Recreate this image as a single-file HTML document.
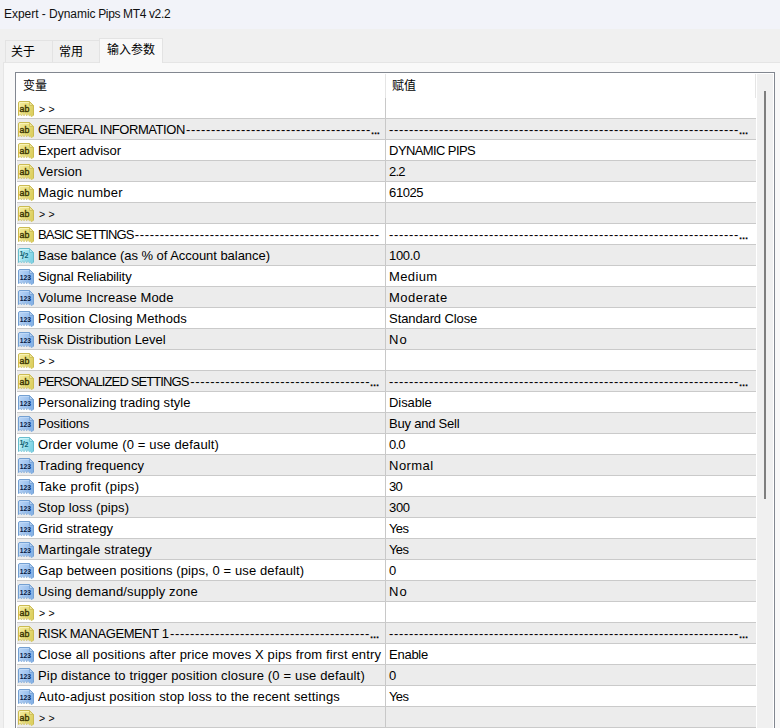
<!DOCTYPE html>
<html><head><meta charset="utf-8"><title>Expert - Dynamic Pips MT4 v2.2</title>
<style>
html,body{margin:0;padding:0;}
body{width:780px;height:728px;overflow:hidden;background:#f0f0f0;position:relative;font-family:"Liberation Sans","Noto Sans CJK SC",sans-serif;color:#000;}
.title{position:absolute;left:0;top:0;width:780px;height:29px;background:#f2f3f9;}
.title span{position:absolute;left:4px;top:7px;font-size:12px;line-height:15px;white-space:pre;letter-spacing:-0.03px;color:#111;}
.tab{position:absolute;top:40px;height:22px;border:1px solid #e3e3e3;border-bottom:none;box-sizing:border-box;background:#f0f0f0;font-size:12px;line-height:22px;padding-left:5px;white-space:nowrap;}
.t1{left:5px;width:48px;}
.t2{left:52px;width:48px;padding-left:6px;}
.t3{left:99px;width:64px;top:38px;height:25px;background:#f9f9f9;z-index:3;line-height:22px;padding-left:7px;}
.panel{position:absolute;left:3px;top:62px;width:790px;height:680px;background:#f9f9f9;border:1px solid #e5e5e5;box-sizing:border-box;}
.list{position:absolute;left:15px;top:72px;width:760px;height:670px;border:1px solid #828790;box-sizing:border-box;background:#fff;}
.hdr{position:absolute;left:1px;top:0;width:740px;height:25px;font-size:12px;}
.hdr span{position:absolute;top:5px;line-height:16px;}
.hsep{position:absolute;top:1px;width:1px;height:24px;background:#e5e5e5;}
.rows{position:absolute;left:1px;top:25px;width:739px;}
.r{position:relative;height:21px;box-sizing:border-box;border-bottom:1px solid #cacaca;font-size:13px;line-height:22px;white-space:nowrap;background:#fff;}
.r.g{background:#ececec;}
.ic{position:absolute;left:1px;top:3px;}
.c1{position:absolute;left:21px;top:0;width:346px;height:20px;overflow:hidden;}
.c2{position:absolute;left:368px;top:0;width:371px;height:20px;box-sizing:border-box;padding-left:3.1px;overflow:hidden;border-left:1px solid #c8c8c8;}
.d{letter-spacing:0.671px;}
.e{letter-spacing:-0.65px;margin-left:-0.4px;-webkit-text-stroke:0.35px #000;}
.gt{font-size:10.5px;word-spacing:0.5px;position:relative;left:1px;top:-0.4px;}
.sb{position:absolute;left:741px;top:1px;width:16px;height:700px;background:#f0f0f0;}
.thumb{position:absolute;left:7px;top:17px;width:2px;height:408px;background:#7f7f7f;}
</style></head><body>
<svg width="0" height="0" style="position:absolute"><defs>
<linearGradient id="gy" x1="0" y1="0" x2="1" y2="0.35"><stop offset="0" stop-color="#f4eca0"/><stop offset="0.55" stop-color="#ebe080"/><stop offset="1" stop-color="#ddd062"/></linearGradient>
<linearGradient id="gb" x1="0" y1="0" x2="1" y2="0.35"><stop offset="0" stop-color="#bcd7f7"/><stop offset="0.55" stop-color="#a2c5f0"/><stop offset="1" stop-color="#86b2e6"/></linearGradient>
<linearGradient id="gc" x1="0" y1="0" x2="1" y2="0.35"><stop offset="0" stop-color="#c4f2f8"/><stop offset="0.55" stop-color="#9fe2ee"/><stop offset="1" stop-color="#80d2e4"/></linearGradient>
</defs></svg>
<div class="title"><span id="ta">Expert - Dynamic </span><span id="tb" style="left:98.2px;letter-spacing:-0.36px">Pips MT4 v2.2</span></div>
<div class="panel"></div>
<div class="tab t1">关于</div>
<div class="tab t2">常用</div>
<div class="tab t3">输入参数</div>
<div class="list">
<div class="hdr"><span style="left:6px;top:5px">变量</span><span style="left:375px;top:5px">赋值</span><div class="hsep" style="left:368px"></div><div class="hsep" style="left:738px"></div></div>
<div class="rows">
<div class="r"><svg class="ic" width="16" height="16" viewBox="0 0 16 16"><path d="M0.5 2 Q0.5 0.5 2 0.5 H11.5 L15.5 4.5 V14.2 L14.6 14.9 L13.4 15.9 L12.4 14.0 L11.3 15 L10 12.6 L8.7 15 L7.4 12.6 L6 15 L4.8 12.6 L3.5 15 L2.2 13 L0.5 15 Z" fill="url(#gy)"/><path d="M0.5 14.6 V2 Q0.5 0.5 2 0.5 H11.5 L15.5 4.5 V14.4" fill="none" stroke="#cbbb52" stroke-width="1" stroke-linejoin="round"/><path d="M15.5 4.5 V14.2 L14.6 14.9 L13.4 15.9 L12.4 14.0 L11.3 15 L10 12.6 L8.7 15 L7.4 12.6 L6 15 L4.8 12.6 L3.5 15 L2.2 13 L0.5 15" fill="none" stroke="#cbbb52" stroke-width="0.5" stroke-linejoin="round"/><path d="M1.5 13 V2 Q1.5 1.5 2 1.5 H11" fill="none" stroke="#fbf6c0" stroke-width="1" stroke-opacity="0.8"/><path d="M11.5 0.7 V4.5 H15.3 Z" fill="#ffffff" fill-opacity="0.32" stroke="#cbbb52" stroke-width="0.8" stroke-linejoin="round"/><text x="1.5" y="10.7" font-size="9.6" fill="#3a3400" stroke="#3a3400" stroke-width="0.4" font-family="Liberation Sans, sans-serif" textLength="9.8" lengthAdjust="spacingAndGlyphs">ab</text></svg><div class="c1"><span id="t0_1" class="gt">&gt; &gt;</span></div><div class="c2"></div></div>
<div class="r g"><svg class="ic" width="16" height="16" viewBox="0 0 16 16"><path d="M0.5 2 Q0.5 0.5 2 0.5 H11.5 L15.5 4.5 V14.2 L14.6 14.9 L13.4 15.9 L12.4 14.0 L11.3 15 L10 12.6 L8.7 15 L7.4 12.6 L6 15 L4.8 12.6 L3.5 15 L2.2 13 L0.5 15 Z" fill="url(#gy)"/><path d="M0.5 14.6 V2 Q0.5 0.5 2 0.5 H11.5 L15.5 4.5 V14.4" fill="none" stroke="#cbbb52" stroke-width="1" stroke-linejoin="round"/><path d="M15.5 4.5 V14.2 L14.6 14.9 L13.4 15.9 L12.4 14.0 L11.3 15 L10 12.6 L8.7 15 L7.4 12.6 L6 15 L4.8 12.6 L3.5 15 L2.2 13 L0.5 15" fill="none" stroke="#cbbb52" stroke-width="0.5" stroke-linejoin="round"/><path d="M1.5 13 V2 Q1.5 1.5 2 1.5 H11" fill="none" stroke="#fbf6c0" stroke-width="1" stroke-opacity="0.8"/><path d="M11.5 0.7 V4.5 H15.3 Z" fill="#ffffff" fill-opacity="0.32" stroke="#cbbb52" stroke-width="0.8" stroke-linejoin="round"/><text x="1.5" y="10.7" font-size="9.6" fill="#3a3400" stroke="#3a3400" stroke-width="0.4" font-family="Liberation Sans, sans-serif" textLength="9.8" lengthAdjust="spacingAndGlyphs">ab</text></svg><div class="c1"><span id="t1_1" style="letter-spacing:-0.443px">GENERAL INFORMATION</span><span class="d" style="margin-left:1.2px">-------------------------------------</span><span class="e">...</span></div><div class="c2"><span class="d" style="margin-left:0px">----------------------------------------------------------------------</span><span class="e">...</span></div></div>
<div class="r"><svg class="ic" width="16" height="16" viewBox="0 0 16 16"><path d="M0.5 2 Q0.5 0.5 2 0.5 H11.5 L15.5 4.5 V14.2 L14.6 14.9 L13.4 15.9 L12.4 14.0 L11.3 15 L10 12.6 L8.7 15 L7.4 12.6 L6 15 L4.8 12.6 L3.5 15 L2.2 13 L0.5 15 Z" fill="url(#gy)"/><path d="M0.5 14.6 V2 Q0.5 0.5 2 0.5 H11.5 L15.5 4.5 V14.4" fill="none" stroke="#cbbb52" stroke-width="1" stroke-linejoin="round"/><path d="M15.5 4.5 V14.2 L14.6 14.9 L13.4 15.9 L12.4 14.0 L11.3 15 L10 12.6 L8.7 15 L7.4 12.6 L6 15 L4.8 12.6 L3.5 15 L2.2 13 L0.5 15" fill="none" stroke="#cbbb52" stroke-width="0.5" stroke-linejoin="round"/><path d="M1.5 13 V2 Q1.5 1.5 2 1.5 H11" fill="none" stroke="#fbf6c0" stroke-width="1" stroke-opacity="0.8"/><path d="M11.5 0.7 V4.5 H15.3 Z" fill="#ffffff" fill-opacity="0.32" stroke="#cbbb52" stroke-width="0.8" stroke-linejoin="round"/><text x="1.5" y="10.7" font-size="9.6" fill="#3a3400" stroke="#3a3400" stroke-width="0.4" font-family="Liberation Sans, sans-serif" textLength="9.8" lengthAdjust="spacingAndGlyphs">ab</text></svg><div class="c1"><span id="t2_1" style="letter-spacing:-0.000px">Expert advisor</span></div><div class="c2"><span id="t2_2" style="letter-spacing:-0.605px">DYNAMIC PIPS</span></div></div>
<div class="r g"><svg class="ic" width="16" height="16" viewBox="0 0 16 16"><path d="M0.5 2 Q0.5 0.5 2 0.5 H11.5 L15.5 4.5 V14.2 L14.6 14.9 L13.4 15.9 L12.4 14.0 L11.3 15 L10 12.6 L8.7 15 L7.4 12.6 L6 15 L4.8 12.6 L3.5 15 L2.2 13 L0.5 15 Z" fill="url(#gy)"/><path d="M0.5 14.6 V2 Q0.5 0.5 2 0.5 H11.5 L15.5 4.5 V14.4" fill="none" stroke="#cbbb52" stroke-width="1" stroke-linejoin="round"/><path d="M15.5 4.5 V14.2 L14.6 14.9 L13.4 15.9 L12.4 14.0 L11.3 15 L10 12.6 L8.7 15 L7.4 12.6 L6 15 L4.8 12.6 L3.5 15 L2.2 13 L0.5 15" fill="none" stroke="#cbbb52" stroke-width="0.5" stroke-linejoin="round"/><path d="M1.5 13 V2 Q1.5 1.5 2 1.5 H11" fill="none" stroke="#fbf6c0" stroke-width="1" stroke-opacity="0.8"/><path d="M11.5 0.7 V4.5 H15.3 Z" fill="#ffffff" fill-opacity="0.32" stroke="#cbbb52" stroke-width="0.8" stroke-linejoin="round"/><text x="1.5" y="10.7" font-size="9.6" fill="#3a3400" stroke="#3a3400" stroke-width="0.4" font-family="Liberation Sans, sans-serif" textLength="9.8" lengthAdjust="spacingAndGlyphs">ab</text></svg><div class="c1"><span id="t3_1" style="letter-spacing:0.117px">Version</span></div><div class="c2"><span id="t3_2" style="letter-spacing:-0.875px">2.2</span></div></div>
<div class="r"><svg class="ic" width="16" height="16" viewBox="0 0 16 16"><path d="M0.5 2 Q0.5 0.5 2 0.5 H11.5 L15.5 4.5 V14.2 L14.6 14.9 L13.4 15.9 L12.4 14.0 L11.3 15 L10 12.6 L8.7 15 L7.4 12.6 L6 15 L4.8 12.6 L3.5 15 L2.2 13 L0.5 15 Z" fill="url(#gy)"/><path d="M0.5 14.6 V2 Q0.5 0.5 2 0.5 H11.5 L15.5 4.5 V14.4" fill="none" stroke="#cbbb52" stroke-width="1" stroke-linejoin="round"/><path d="M15.5 4.5 V14.2 L14.6 14.9 L13.4 15.9 L12.4 14.0 L11.3 15 L10 12.6 L8.7 15 L7.4 12.6 L6 15 L4.8 12.6 L3.5 15 L2.2 13 L0.5 15" fill="none" stroke="#cbbb52" stroke-width="0.5" stroke-linejoin="round"/><path d="M1.5 13 V2 Q1.5 1.5 2 1.5 H11" fill="none" stroke="#fbf6c0" stroke-width="1" stroke-opacity="0.8"/><path d="M11.5 0.7 V4.5 H15.3 Z" fill="#ffffff" fill-opacity="0.32" stroke="#cbbb52" stroke-width="0.8" stroke-linejoin="round"/><text x="1.5" y="10.7" font-size="9.6" fill="#3a3400" stroke="#3a3400" stroke-width="0.4" font-family="Liberation Sans, sans-serif" textLength="9.8" lengthAdjust="spacingAndGlyphs">ab</text></svg><div class="c1"><span id="t4_1" style="letter-spacing:0.191px">Magic number</span></div><div class="c2"><span id="t4_2" style="letter-spacing:-0.438px">61025</span></div></div>
<div class="r g"><svg class="ic" width="16" height="16" viewBox="0 0 16 16"><path d="M0.5 2 Q0.5 0.5 2 0.5 H11.5 L15.5 4.5 V14.2 L14.6 14.9 L13.4 15.9 L12.4 14.0 L11.3 15 L10 12.6 L8.7 15 L7.4 12.6 L6 15 L4.8 12.6 L3.5 15 L2.2 13 L0.5 15 Z" fill="url(#gy)"/><path d="M0.5 14.6 V2 Q0.5 0.5 2 0.5 H11.5 L15.5 4.5 V14.4" fill="none" stroke="#cbbb52" stroke-width="1" stroke-linejoin="round"/><path d="M15.5 4.5 V14.2 L14.6 14.9 L13.4 15.9 L12.4 14.0 L11.3 15 L10 12.6 L8.7 15 L7.4 12.6 L6 15 L4.8 12.6 L3.5 15 L2.2 13 L0.5 15" fill="none" stroke="#cbbb52" stroke-width="0.5" stroke-linejoin="round"/><path d="M1.5 13 V2 Q1.5 1.5 2 1.5 H11" fill="none" stroke="#fbf6c0" stroke-width="1" stroke-opacity="0.8"/><path d="M11.5 0.7 V4.5 H15.3 Z" fill="#ffffff" fill-opacity="0.32" stroke="#cbbb52" stroke-width="0.8" stroke-linejoin="round"/><text x="1.5" y="10.7" font-size="9.6" fill="#3a3400" stroke="#3a3400" stroke-width="0.4" font-family="Liberation Sans, sans-serif" textLength="9.8" lengthAdjust="spacingAndGlyphs">ab</text></svg><div class="c1"><span id="t5_1" class="gt">&gt; &gt;</span></div><div class="c2"></div></div>
<div class="r"><svg class="ic" width="16" height="16" viewBox="0 0 16 16"><path d="M0.5 2 Q0.5 0.5 2 0.5 H11.5 L15.5 4.5 V14.2 L14.6 14.9 L13.4 15.9 L12.4 14.0 L11.3 15 L10 12.6 L8.7 15 L7.4 12.6 L6 15 L4.8 12.6 L3.5 15 L2.2 13 L0.5 15 Z" fill="url(#gy)"/><path d="M0.5 14.6 V2 Q0.5 0.5 2 0.5 H11.5 L15.5 4.5 V14.4" fill="none" stroke="#cbbb52" stroke-width="1" stroke-linejoin="round"/><path d="M15.5 4.5 V14.2 L14.6 14.9 L13.4 15.9 L12.4 14.0 L11.3 15 L10 12.6 L8.7 15 L7.4 12.6 L6 15 L4.8 12.6 L3.5 15 L2.2 13 L0.5 15" fill="none" stroke="#cbbb52" stroke-width="0.5" stroke-linejoin="round"/><path d="M1.5 13 V2 Q1.5 1.5 2 1.5 H11" fill="none" stroke="#fbf6c0" stroke-width="1" stroke-opacity="0.8"/><path d="M11.5 0.7 V4.5 H15.3 Z" fill="#ffffff" fill-opacity="0.32" stroke="#cbbb52" stroke-width="0.8" stroke-linejoin="round"/><text x="1.5" y="10.7" font-size="9.6" fill="#3a3400" stroke="#3a3400" stroke-width="0.4" font-family="Liberation Sans, sans-serif" textLength="9.8" lengthAdjust="spacingAndGlyphs">ab</text></svg><div class="c1"><span id="t6_1" style="letter-spacing:-0.855px">BASIC SETTINGS</span><span class="d" style="margin-left:1.0px">-------------------------------------------------</span></div><div class="c2"><span class="d" style="margin-left:0px">----------------------------------------------------------------------</span><span class="e">...</span></div></div>
<div class="r g"><svg class="ic" width="16" height="16" viewBox="0 0 16 16"><path d="M0.5 2 Q0.5 0.5 2 0.5 H11.5 L15.5 4.5 V14.2 L14.6 14.9 L13.4 15.9 L12.4 14.0 L11.3 15 L10 12.6 L8.7 15 L7.4 12.6 L6 15 L4.8 12.6 L3.5 15 L2.2 13 L0.5 15 Z" fill="url(#gc)"/><path d="M0.5 14.6 V2 Q0.5 0.5 2 0.5 H11.5 L15.5 4.5 V14.4" fill="none" stroke="#68bccd" stroke-width="1" stroke-linejoin="round"/><path d="M15.5 4.5 V14.2 L14.6 14.9 L13.4 15.9 L12.4 14.0 L11.3 15 L10 12.6 L8.7 15 L7.4 12.6 L6 15 L4.8 12.6 L3.5 15 L2.2 13 L0.5 15" fill="none" stroke="#68bccd" stroke-width="0.5" stroke-linejoin="round"/><path d="M1.5 13 V2 Q1.5 1.5 2 1.5 H11" fill="none" stroke="#d0f6fa" stroke-width="1" stroke-opacity="0.8"/><path d="M11.5 0.7 V4.5 H15.3 Z" fill="#ffffff" fill-opacity="0.32" stroke="#68bccd" stroke-width="0.8" stroke-linejoin="round"/><text x="1.6" y="7.8" font-size="7.2" font-weight="bold" fill="#0e6070" font-family="Liberation Sans, sans-serif">1</text><text x="4.1" y="10.6" font-size="9.5" fill="#0e6070" stroke="#0e6070" stroke-width="0.2" font-family="Liberation Sans, sans-serif">/</text><text x="6.4" y="10.2" font-size="7" font-weight="bold" fill="#0e6070" font-family="Liberation Sans, sans-serif">2</text></svg><div class="c1"><span id="t7_1" style="letter-spacing:-0.038px">Base balance (as % of Account balance)</span></div><div class="c2"><span id="t7_2" style="letter-spacing:-0.350px">100.0</span></div></div>
<div class="r"><svg class="ic" width="16" height="16" viewBox="0 0 16 16"><path d="M0.5 2 Q0.5 0.5 2 0.5 H11.5 L15.5 4.5 V14.2 L14.6 14.9 L13.4 15.9 L12.4 14.0 L11.3 15 L10 12.6 L8.7 15 L7.4 12.6 L6 15 L4.8 12.6 L3.5 15 L2.2 13 L0.5 15 Z" fill="url(#gb)"/><path d="M0.5 14.6 V2 Q0.5 0.5 2 0.5 H11.5 L15.5 4.5 V14.4" fill="none" stroke="#74a0d2" stroke-width="1" stroke-linejoin="round"/><path d="M15.5 4.5 V14.2 L14.6 14.9 L13.4 15.9 L12.4 14.0 L11.3 15 L10 12.6 L8.7 15 L7.4 12.6 L6 15 L4.8 12.6 L3.5 15 L2.2 13 L0.5 15" fill="none" stroke="#74a0d2" stroke-width="0.5" stroke-linejoin="round"/><path d="M1.5 13 V2 Q1.5 1.5 2 1.5 H11" fill="none" stroke="#c4dcf8" stroke-width="1" stroke-opacity="0.8"/><path d="M11.5 0.7 V4.5 H15.3 Z" fill="#ffffff" fill-opacity="0.32" stroke="#74a0d2" stroke-width="0.8" stroke-linejoin="round"/><text x="1.7" y="10.9" font-size="7.4" font-weight="bold" fill="#061a44" font-family="Liberation Sans, sans-serif" textLength="11.2" lengthAdjust="spacingAndGlyphs">123</text></svg><div class="c1"><span id="t8_1" style="letter-spacing:-0.103px">Signal Reliability</span></div><div class="c2"><span id="t8_2" style="letter-spacing:0.350px">Medium</span></div></div>
<div class="r g"><svg class="ic" width="16" height="16" viewBox="0 0 16 16"><path d="M0.5 2 Q0.5 0.5 2 0.5 H11.5 L15.5 4.5 V14.2 L14.6 14.9 L13.4 15.9 L12.4 14.0 L11.3 15 L10 12.6 L8.7 15 L7.4 12.6 L6 15 L4.8 12.6 L3.5 15 L2.2 13 L0.5 15 Z" fill="url(#gb)"/><path d="M0.5 14.6 V2 Q0.5 0.5 2 0.5 H11.5 L15.5 4.5 V14.4" fill="none" stroke="#74a0d2" stroke-width="1" stroke-linejoin="round"/><path d="M15.5 4.5 V14.2 L14.6 14.9 L13.4 15.9 L12.4 14.0 L11.3 15 L10 12.6 L8.7 15 L7.4 12.6 L6 15 L4.8 12.6 L3.5 15 L2.2 13 L0.5 15" fill="none" stroke="#74a0d2" stroke-width="0.5" stroke-linejoin="round"/><path d="M1.5 13 V2 Q1.5 1.5 2 1.5 H11" fill="none" stroke="#c4dcf8" stroke-width="1" stroke-opacity="0.8"/><path d="M11.5 0.7 V4.5 H15.3 Z" fill="#ffffff" fill-opacity="0.32" stroke="#74a0d2" stroke-width="0.8" stroke-linejoin="round"/><text x="1.7" y="10.9" font-size="7.4" font-weight="bold" fill="#061a44" font-family="Liberation Sans, sans-serif" textLength="11.2" lengthAdjust="spacingAndGlyphs">123</text></svg><div class="c1"><span id="t9_1" style="letter-spacing:0.129px">Volume Increase Mode</span></div><div class="c2"><span id="t9_2" style="letter-spacing:0.450px">Moderate</span></div></div>
<div class="r"><svg class="ic" width="16" height="16" viewBox="0 0 16 16"><path d="M0.5 2 Q0.5 0.5 2 0.5 H11.5 L15.5 4.5 V14.2 L14.6 14.9 L13.4 15.9 L12.4 14.0 L11.3 15 L10 12.6 L8.7 15 L7.4 12.6 L6 15 L4.8 12.6 L3.5 15 L2.2 13 L0.5 15 Z" fill="url(#gb)"/><path d="M0.5 14.6 V2 Q0.5 0.5 2 0.5 H11.5 L15.5 4.5 V14.4" fill="none" stroke="#74a0d2" stroke-width="1" stroke-linejoin="round"/><path d="M15.5 4.5 V14.2 L14.6 14.9 L13.4 15.9 L12.4 14.0 L11.3 15 L10 12.6 L8.7 15 L7.4 12.6 L6 15 L4.8 12.6 L3.5 15 L2.2 13 L0.5 15" fill="none" stroke="#74a0d2" stroke-width="0.5" stroke-linejoin="round"/><path d="M1.5 13 V2 Q1.5 1.5 2 1.5 H11" fill="none" stroke="#c4dcf8" stroke-width="1" stroke-opacity="0.8"/><path d="M11.5 0.7 V4.5 H15.3 Z" fill="#ffffff" fill-opacity="0.32" stroke="#74a0d2" stroke-width="0.8" stroke-linejoin="round"/><text x="1.7" y="10.9" font-size="7.4" font-weight="bold" fill="#061a44" font-family="Liberation Sans, sans-serif" textLength="11.2" lengthAdjust="spacingAndGlyphs">123</text></svg><div class="c1"><span id="t10_1" style="letter-spacing:0.091px">Position Closing Methods</span></div><div class="c2"><span id="t10_2" style="letter-spacing:-0.108px">Standard Close</span></div></div>
<div class="r g"><svg class="ic" width="16" height="16" viewBox="0 0 16 16"><path d="M0.5 2 Q0.5 0.5 2 0.5 H11.5 L15.5 4.5 V14.2 L14.6 14.9 L13.4 15.9 L12.4 14.0 L11.3 15 L10 12.6 L8.7 15 L7.4 12.6 L6 15 L4.8 12.6 L3.5 15 L2.2 13 L0.5 15 Z" fill="url(#gb)"/><path d="M0.5 14.6 V2 Q0.5 0.5 2 0.5 H11.5 L15.5 4.5 V14.4" fill="none" stroke="#74a0d2" stroke-width="1" stroke-linejoin="round"/><path d="M15.5 4.5 V14.2 L14.6 14.9 L13.4 15.9 L12.4 14.0 L11.3 15 L10 12.6 L8.7 15 L7.4 12.6 L6 15 L4.8 12.6 L3.5 15 L2.2 13 L0.5 15" fill="none" stroke="#74a0d2" stroke-width="0.5" stroke-linejoin="round"/><path d="M1.5 13 V2 Q1.5 1.5 2 1.5 H11" fill="none" stroke="#c4dcf8" stroke-width="1" stroke-opacity="0.8"/><path d="M11.5 0.7 V4.5 H15.3 Z" fill="#ffffff" fill-opacity="0.32" stroke="#74a0d2" stroke-width="0.8" stroke-linejoin="round"/><text x="1.7" y="10.9" font-size="7.4" font-weight="bold" fill="#061a44" font-family="Liberation Sans, sans-serif" textLength="11.2" lengthAdjust="spacingAndGlyphs">123</text></svg><div class="c1"><span id="t11_1" style="letter-spacing:-0.048px">Risk Distribution Level</span></div><div class="c2"><span id="t11_2" style="letter-spacing:1.050px">No</span></div></div>
<div class="r"><svg class="ic" width="16" height="16" viewBox="0 0 16 16"><path d="M0.5 2 Q0.5 0.5 2 0.5 H11.5 L15.5 4.5 V14.2 L14.6 14.9 L13.4 15.9 L12.4 14.0 L11.3 15 L10 12.6 L8.7 15 L7.4 12.6 L6 15 L4.8 12.6 L3.5 15 L2.2 13 L0.5 15 Z" fill="url(#gy)"/><path d="M0.5 14.6 V2 Q0.5 0.5 2 0.5 H11.5 L15.5 4.5 V14.4" fill="none" stroke="#cbbb52" stroke-width="1" stroke-linejoin="round"/><path d="M15.5 4.5 V14.2 L14.6 14.9 L13.4 15.9 L12.4 14.0 L11.3 15 L10 12.6 L8.7 15 L7.4 12.6 L6 15 L4.8 12.6 L3.5 15 L2.2 13 L0.5 15" fill="none" stroke="#cbbb52" stroke-width="0.5" stroke-linejoin="round"/><path d="M1.5 13 V2 Q1.5 1.5 2 1.5 H11" fill="none" stroke="#fbf6c0" stroke-width="1" stroke-opacity="0.8"/><path d="M11.5 0.7 V4.5 H15.3 Z" fill="#ffffff" fill-opacity="0.32" stroke="#cbbb52" stroke-width="0.8" stroke-linejoin="round"/><text x="1.5" y="10.7" font-size="9.6" fill="#3a3400" stroke="#3a3400" stroke-width="0.4" font-family="Liberation Sans, sans-serif" textLength="9.8" lengthAdjust="spacingAndGlyphs">ab</text></svg><div class="c1"><span id="t12_1" class="gt">&gt; &gt;</span></div><div class="c2"></div></div>
<div class="r g"><svg class="ic" width="16" height="16" viewBox="0 0 16 16"><path d="M0.5 2 Q0.5 0.5 2 0.5 H11.5 L15.5 4.5 V14.2 L14.6 14.9 L13.4 15.9 L12.4 14.0 L11.3 15 L10 12.6 L8.7 15 L7.4 12.6 L6 15 L4.8 12.6 L3.5 15 L2.2 13 L0.5 15 Z" fill="url(#gy)"/><path d="M0.5 14.6 V2 Q0.5 0.5 2 0.5 H11.5 L15.5 4.5 V14.4" fill="none" stroke="#cbbb52" stroke-width="1" stroke-linejoin="round"/><path d="M15.5 4.5 V14.2 L14.6 14.9 L13.4 15.9 L12.4 14.0 L11.3 15 L10 12.6 L8.7 15 L7.4 12.6 L6 15 L4.8 12.6 L3.5 15 L2.2 13 L0.5 15" fill="none" stroke="#cbbb52" stroke-width="0.5" stroke-linejoin="round"/><path d="M1.5 13 V2 Q1.5 1.5 2 1.5 H11" fill="none" stroke="#fbf6c0" stroke-width="1" stroke-opacity="0.8"/><path d="M11.5 0.7 V4.5 H15.3 Z" fill="#ffffff" fill-opacity="0.32" stroke="#cbbb52" stroke-width="0.8" stroke-linejoin="round"/><text x="1.5" y="10.7" font-size="9.6" fill="#3a3400" stroke="#3a3400" stroke-width="0.4" font-family="Liberation Sans, sans-serif" textLength="9.8" lengthAdjust="spacingAndGlyphs">ab</text></svg><div class="c1"><span id="t13_1" style="letter-spacing:-0.875px">PERSONALIZED SETTINGS</span><span class="d" style="margin-left:1.5px">------------------------------------</span><span class="e">...</span></div><div class="c2"><span class="d" style="margin-left:0px">----------------------------------------------------------------------</span><span class="e">...</span></div></div>
<div class="r"><svg class="ic" width="16" height="16" viewBox="0 0 16 16"><path d="M0.5 2 Q0.5 0.5 2 0.5 H11.5 L15.5 4.5 V14.2 L14.6 14.9 L13.4 15.9 L12.4 14.0 L11.3 15 L10 12.6 L8.7 15 L7.4 12.6 L6 15 L4.8 12.6 L3.5 15 L2.2 13 L0.5 15 Z" fill="url(#gb)"/><path d="M0.5 14.6 V2 Q0.5 0.5 2 0.5 H11.5 L15.5 4.5 V14.4" fill="none" stroke="#74a0d2" stroke-width="1" stroke-linejoin="round"/><path d="M15.5 4.5 V14.2 L14.6 14.9 L13.4 15.9 L12.4 14.0 L11.3 15 L10 12.6 L8.7 15 L7.4 12.6 L6 15 L4.8 12.6 L3.5 15 L2.2 13 L0.5 15" fill="none" stroke="#74a0d2" stroke-width="0.5" stroke-linejoin="round"/><path d="M1.5 13 V2 Q1.5 1.5 2 1.5 H11" fill="none" stroke="#c4dcf8" stroke-width="1" stroke-opacity="0.8"/><path d="M11.5 0.7 V4.5 H15.3 Z" fill="#ffffff" fill-opacity="0.32" stroke="#74a0d2" stroke-width="0.8" stroke-linejoin="round"/><text x="1.7" y="10.9" font-size="7.4" font-weight="bold" fill="#061a44" font-family="Liberation Sans, sans-serif" textLength="11.2" lengthAdjust="spacingAndGlyphs">123</text></svg><div class="c1"><span id="t14_1" style="letter-spacing:0.027px">Personalizing trading style</span></div><div class="c2"><span id="t14_2" style="letter-spacing:-0.117px">Disable</span></div></div>
<div class="r g"><svg class="ic" width="16" height="16" viewBox="0 0 16 16"><path d="M0.5 2 Q0.5 0.5 2 0.5 H11.5 L15.5 4.5 V14.2 L14.6 14.9 L13.4 15.9 L12.4 14.0 L11.3 15 L10 12.6 L8.7 15 L7.4 12.6 L6 15 L4.8 12.6 L3.5 15 L2.2 13 L0.5 15 Z" fill="url(#gb)"/><path d="M0.5 14.6 V2 Q0.5 0.5 2 0.5 H11.5 L15.5 4.5 V14.4" fill="none" stroke="#74a0d2" stroke-width="1" stroke-linejoin="round"/><path d="M15.5 4.5 V14.2 L14.6 14.9 L13.4 15.9 L12.4 14.0 L11.3 15 L10 12.6 L8.7 15 L7.4 12.6 L6 15 L4.8 12.6 L3.5 15 L2.2 13 L0.5 15" fill="none" stroke="#74a0d2" stroke-width="0.5" stroke-linejoin="round"/><path d="M1.5 13 V2 Q1.5 1.5 2 1.5 H11" fill="none" stroke="#c4dcf8" stroke-width="1" stroke-opacity="0.8"/><path d="M11.5 0.7 V4.5 H15.3 Z" fill="#ffffff" fill-opacity="0.32" stroke="#74a0d2" stroke-width="0.8" stroke-linejoin="round"/><text x="1.7" y="10.9" font-size="7.4" font-weight="bold" fill="#061a44" font-family="Liberation Sans, sans-serif" textLength="11.2" lengthAdjust="spacingAndGlyphs">123</text></svg><div class="c1"><span id="t15_1" style="letter-spacing:-0.175px">Positions</span></div><div class="c2"><span id="t15_2" style="letter-spacing:-0.223px">Buy and Sell</span></div></div>
<div class="r"><svg class="ic" width="16" height="16" viewBox="0 0 16 16"><path d="M0.5 2 Q0.5 0.5 2 0.5 H11.5 L15.5 4.5 V14.2 L14.6 14.9 L13.4 15.9 L12.4 14.0 L11.3 15 L10 12.6 L8.7 15 L7.4 12.6 L6 15 L4.8 12.6 L3.5 15 L2.2 13 L0.5 15 Z" fill="url(#gc)"/><path d="M0.5 14.6 V2 Q0.5 0.5 2 0.5 H11.5 L15.5 4.5 V14.4" fill="none" stroke="#68bccd" stroke-width="1" stroke-linejoin="round"/><path d="M15.5 4.5 V14.2 L14.6 14.9 L13.4 15.9 L12.4 14.0 L11.3 15 L10 12.6 L8.7 15 L7.4 12.6 L6 15 L4.8 12.6 L3.5 15 L2.2 13 L0.5 15" fill="none" stroke="#68bccd" stroke-width="0.5" stroke-linejoin="round"/><path d="M1.5 13 V2 Q1.5 1.5 2 1.5 H11" fill="none" stroke="#d0f6fa" stroke-width="1" stroke-opacity="0.8"/><path d="M11.5 0.7 V4.5 H15.3 Z" fill="#ffffff" fill-opacity="0.32" stroke="#68bccd" stroke-width="0.8" stroke-linejoin="round"/><text x="1.6" y="7.8" font-size="7.2" font-weight="bold" fill="#0e6070" font-family="Liberation Sans, sans-serif">1</text><text x="4.1" y="10.6" font-size="9.5" fill="#0e6070" stroke="#0e6070" stroke-width="0.2" font-family="Liberation Sans, sans-serif">/</text><text x="6.4" y="10.2" font-size="7" font-weight="bold" fill="#0e6070" font-family="Liberation Sans, sans-serif">2</text></svg><div class="c1"><span id="t16_1" style="letter-spacing:0.145px">Order volume (0 = use default)</span></div><div class="c2"><span id="t16_2" style="letter-spacing:-0.875px">0.0</span></div></div>
<div class="r g"><svg class="ic" width="16" height="16" viewBox="0 0 16 16"><path d="M0.5 2 Q0.5 0.5 2 0.5 H11.5 L15.5 4.5 V14.2 L14.6 14.9 L13.4 15.9 L12.4 14.0 L11.3 15 L10 12.6 L8.7 15 L7.4 12.6 L6 15 L4.8 12.6 L3.5 15 L2.2 13 L0.5 15 Z" fill="url(#gb)"/><path d="M0.5 14.6 V2 Q0.5 0.5 2 0.5 H11.5 L15.5 4.5 V14.4" fill="none" stroke="#74a0d2" stroke-width="1" stroke-linejoin="round"/><path d="M15.5 4.5 V14.2 L14.6 14.9 L13.4 15.9 L12.4 14.0 L11.3 15 L10 12.6 L8.7 15 L7.4 12.6 L6 15 L4.8 12.6 L3.5 15 L2.2 13 L0.5 15" fill="none" stroke="#74a0d2" stroke-width="0.5" stroke-linejoin="round"/><path d="M1.5 13 V2 Q1.5 1.5 2 1.5 H11" fill="none" stroke="#c4dcf8" stroke-width="1" stroke-opacity="0.8"/><path d="M11.5 0.7 V4.5 H15.3 Z" fill="#ffffff" fill-opacity="0.32" stroke="#74a0d2" stroke-width="0.8" stroke-linejoin="round"/><text x="1.7" y="10.9" font-size="7.4" font-weight="bold" fill="#061a44" font-family="Liberation Sans, sans-serif" textLength="11.2" lengthAdjust="spacingAndGlyphs">123</text></svg><div class="c1"><span id="t17_1" style="letter-spacing:0.109px">Trading frequency</span></div><div class="c2"><span id="t17_2" style="letter-spacing:0.420px">Normal</span></div></div>
<div class="r"><svg class="ic" width="16" height="16" viewBox="0 0 16 16"><path d="M0.5 2 Q0.5 0.5 2 0.5 H11.5 L15.5 4.5 V14.2 L14.6 14.9 L13.4 15.9 L12.4 14.0 L11.3 15 L10 12.6 L8.7 15 L7.4 12.6 L6 15 L4.8 12.6 L3.5 15 L2.2 13 L0.5 15 Z" fill="url(#gb)"/><path d="M0.5 14.6 V2 Q0.5 0.5 2 0.5 H11.5 L15.5 4.5 V14.4" fill="none" stroke="#74a0d2" stroke-width="1" stroke-linejoin="round"/><path d="M15.5 4.5 V14.2 L14.6 14.9 L13.4 15.9 L12.4 14.0 L11.3 15 L10 12.6 L8.7 15 L7.4 12.6 L6 15 L4.8 12.6 L3.5 15 L2.2 13 L0.5 15" fill="none" stroke="#74a0d2" stroke-width="0.5" stroke-linejoin="round"/><path d="M1.5 13 V2 Q1.5 1.5 2 1.5 H11" fill="none" stroke="#c4dcf8" stroke-width="1" stroke-opacity="0.8"/><path d="M11.5 0.7 V4.5 H15.3 Z" fill="#ffffff" fill-opacity="0.32" stroke="#74a0d2" stroke-width="0.8" stroke-linejoin="round"/><text x="1.7" y="10.9" font-size="7.4" font-weight="bold" fill="#061a44" font-family="Liberation Sans, sans-serif" textLength="11.2" lengthAdjust="spacingAndGlyphs">123</text></svg><div class="c1"><span id="t18_1" style="letter-spacing:0.288px">Take profit (pips)</span></div><div class="c2"><span id="t18_2" style="letter-spacing:-0.700px">30</span></div></div>
<div class="r g"><svg class="ic" width="16" height="16" viewBox="0 0 16 16"><path d="M0.5 2 Q0.5 0.5 2 0.5 H11.5 L15.5 4.5 V14.2 L14.6 14.9 L13.4 15.9 L12.4 14.0 L11.3 15 L10 12.6 L8.7 15 L7.4 12.6 L6 15 L4.8 12.6 L3.5 15 L2.2 13 L0.5 15 Z" fill="url(#gb)"/><path d="M0.5 14.6 V2 Q0.5 0.5 2 0.5 H11.5 L15.5 4.5 V14.4" fill="none" stroke="#74a0d2" stroke-width="1" stroke-linejoin="round"/><path d="M15.5 4.5 V14.2 L14.6 14.9 L13.4 15.9 L12.4 14.0 L11.3 15 L10 12.6 L8.7 15 L7.4 12.6 L6 15 L4.8 12.6 L3.5 15 L2.2 13 L0.5 15" fill="none" stroke="#74a0d2" stroke-width="0.5" stroke-linejoin="round"/><path d="M1.5 13 V2 Q1.5 1.5 2 1.5 H11" fill="none" stroke="#c4dcf8" stroke-width="1" stroke-opacity="0.8"/><path d="M11.5 0.7 V4.5 H15.3 Z" fill="#ffffff" fill-opacity="0.32" stroke="#74a0d2" stroke-width="0.8" stroke-linejoin="round"/><text x="1.7" y="10.9" font-size="7.4" font-weight="bold" fill="#061a44" font-family="Liberation Sans, sans-serif" textLength="11.2" lengthAdjust="spacingAndGlyphs">123</text></svg><div class="c1"><span id="t19_1" style="letter-spacing:0.093px">Stop loss (pips)</span></div><div class="c2"><span id="t19_2" style="letter-spacing:-0.350px">300</span></div></div>
<div class="r"><svg class="ic" width="16" height="16" viewBox="0 0 16 16"><path d="M0.5 2 Q0.5 0.5 2 0.5 H11.5 L15.5 4.5 V14.2 L14.6 14.9 L13.4 15.9 L12.4 14.0 L11.3 15 L10 12.6 L8.7 15 L7.4 12.6 L6 15 L4.8 12.6 L3.5 15 L2.2 13 L0.5 15 Z" fill="url(#gb)"/><path d="M0.5 14.6 V2 Q0.5 0.5 2 0.5 H11.5 L15.5 4.5 V14.4" fill="none" stroke="#74a0d2" stroke-width="1" stroke-linejoin="round"/><path d="M15.5 4.5 V14.2 L14.6 14.9 L13.4 15.9 L12.4 14.0 L11.3 15 L10 12.6 L8.7 15 L7.4 12.6 L6 15 L4.8 12.6 L3.5 15 L2.2 13 L0.5 15" fill="none" stroke="#74a0d2" stroke-width="0.5" stroke-linejoin="round"/><path d="M1.5 13 V2 Q1.5 1.5 2 1.5 H11" fill="none" stroke="#c4dcf8" stroke-width="1" stroke-opacity="0.8"/><path d="M11.5 0.7 V4.5 H15.3 Z" fill="#ffffff" fill-opacity="0.32" stroke="#74a0d2" stroke-width="0.8" stroke-linejoin="round"/><text x="1.7" y="10.9" font-size="7.4" font-weight="bold" fill="#061a44" font-family="Liberation Sans, sans-serif" textLength="11.2" lengthAdjust="spacingAndGlyphs">123</text></svg><div class="c1"><span id="t20_1" style="letter-spacing:0.058px">Grid strategy</span></div><div class="c2"><span id="t20_2" style="letter-spacing:-0.700px">Yes</span></div></div>
<div class="r g"><svg class="ic" width="16" height="16" viewBox="0 0 16 16"><path d="M0.5 2 Q0.5 0.5 2 0.5 H11.5 L15.5 4.5 V14.2 L14.6 14.9 L13.4 15.9 L12.4 14.0 L11.3 15 L10 12.6 L8.7 15 L7.4 12.6 L6 15 L4.8 12.6 L3.5 15 L2.2 13 L0.5 15 Z" fill="url(#gb)"/><path d="M0.5 14.6 V2 Q0.5 0.5 2 0.5 H11.5 L15.5 4.5 V14.4" fill="none" stroke="#74a0d2" stroke-width="1" stroke-linejoin="round"/><path d="M15.5 4.5 V14.2 L14.6 14.9 L13.4 15.9 L12.4 14.0 L11.3 15 L10 12.6 L8.7 15 L7.4 12.6 L6 15 L4.8 12.6 L3.5 15 L2.2 13 L0.5 15" fill="none" stroke="#74a0d2" stroke-width="0.5" stroke-linejoin="round"/><path d="M1.5 13 V2 Q1.5 1.5 2 1.5 H11" fill="none" stroke="#c4dcf8" stroke-width="1" stroke-opacity="0.8"/><path d="M11.5 0.7 V4.5 H15.3 Z" fill="#ffffff" fill-opacity="0.32" stroke="#74a0d2" stroke-width="0.8" stroke-linejoin="round"/><text x="1.7" y="10.9" font-size="7.4" font-weight="bold" fill="#061a44" font-family="Liberation Sans, sans-serif" textLength="11.2" lengthAdjust="spacingAndGlyphs">123</text></svg><div class="c1"><span id="t21_1" style="letter-spacing:0.175px">Martingale strategy</span></div><div class="c2"><span id="t21_2" style="letter-spacing:-0.700px">Yes</span></div></div>
<div class="r"><svg class="ic" width="16" height="16" viewBox="0 0 16 16"><path d="M0.5 2 Q0.5 0.5 2 0.5 H11.5 L15.5 4.5 V14.2 L14.6 14.9 L13.4 15.9 L12.4 14.0 L11.3 15 L10 12.6 L8.7 15 L7.4 12.6 L6 15 L4.8 12.6 L3.5 15 L2.2 13 L0.5 15 Z" fill="url(#gb)"/><path d="M0.5 14.6 V2 Q0.5 0.5 2 0.5 H11.5 L15.5 4.5 V14.4" fill="none" stroke="#74a0d2" stroke-width="1" stroke-linejoin="round"/><path d="M15.5 4.5 V14.2 L14.6 14.9 L13.4 15.9 L12.4 14.0 L11.3 15 L10 12.6 L8.7 15 L7.4 12.6 L6 15 L4.8 12.6 L3.5 15 L2.2 13 L0.5 15" fill="none" stroke="#74a0d2" stroke-width="0.5" stroke-linejoin="round"/><path d="M1.5 13 V2 Q1.5 1.5 2 1.5 H11" fill="none" stroke="#c4dcf8" stroke-width="1" stroke-opacity="0.8"/><path d="M11.5 0.7 V4.5 H15.3 Z" fill="#ffffff" fill-opacity="0.32" stroke="#74a0d2" stroke-width="0.8" stroke-linejoin="round"/><text x="1.7" y="10.9" font-size="7.4" font-weight="bold" fill="#061a44" font-family="Liberation Sans, sans-serif" textLength="11.2" lengthAdjust="spacingAndGlyphs">123</text></svg><div class="c1"><span id="t22_1" style="letter-spacing:0.111px">Gap between positions (pips, 0 = use default)</span></div><div class="c2"><span id="t22_2" style="letter-spacing:0.000px">0</span></div></div>
<div class="r g"><svg class="ic" width="16" height="16" viewBox="0 0 16 16"><path d="M0.5 2 Q0.5 0.5 2 0.5 H11.5 L15.5 4.5 V14.2 L14.6 14.9 L13.4 15.9 L12.4 14.0 L11.3 15 L10 12.6 L8.7 15 L7.4 12.6 L6 15 L4.8 12.6 L3.5 15 L2.2 13 L0.5 15 Z" fill="url(#gb)"/><path d="M0.5 14.6 V2 Q0.5 0.5 2 0.5 H11.5 L15.5 4.5 V14.4" fill="none" stroke="#74a0d2" stroke-width="1" stroke-linejoin="round"/><path d="M15.5 4.5 V14.2 L14.6 14.9 L13.4 15.9 L12.4 14.0 L11.3 15 L10 12.6 L8.7 15 L7.4 12.6 L6 15 L4.8 12.6 L3.5 15 L2.2 13 L0.5 15" fill="none" stroke="#74a0d2" stroke-width="0.5" stroke-linejoin="round"/><path d="M1.5 13 V2 Q1.5 1.5 2 1.5 H11" fill="none" stroke="#c4dcf8" stroke-width="1" stroke-opacity="0.8"/><path d="M11.5 0.7 V4.5 H15.3 Z" fill="#ffffff" fill-opacity="0.32" stroke="#74a0d2" stroke-width="0.8" stroke-linejoin="round"/><text x="1.7" y="10.9" font-size="7.4" font-weight="bold" fill="#061a44" font-family="Liberation Sans, sans-serif" textLength="11.2" lengthAdjust="spacingAndGlyphs">123</text></svg><div class="c1"><span id="t23_1" style="letter-spacing:0.122px">Using demand/supply zone</span></div><div class="c2"><span id="t23_2" style="letter-spacing:1.050px">No</span></div></div>
<div class="r"><svg class="ic" width="16" height="16" viewBox="0 0 16 16"><path d="M0.5 2 Q0.5 0.5 2 0.5 H11.5 L15.5 4.5 V14.2 L14.6 14.9 L13.4 15.9 L12.4 14.0 L11.3 15 L10 12.6 L8.7 15 L7.4 12.6 L6 15 L4.8 12.6 L3.5 15 L2.2 13 L0.5 15 Z" fill="url(#gy)"/><path d="M0.5 14.6 V2 Q0.5 0.5 2 0.5 H11.5 L15.5 4.5 V14.4" fill="none" stroke="#cbbb52" stroke-width="1" stroke-linejoin="round"/><path d="M15.5 4.5 V14.2 L14.6 14.9 L13.4 15.9 L12.4 14.0 L11.3 15 L10 12.6 L8.7 15 L7.4 12.6 L6 15 L4.8 12.6 L3.5 15 L2.2 13 L0.5 15" fill="none" stroke="#cbbb52" stroke-width="0.5" stroke-linejoin="round"/><path d="M1.5 13 V2 Q1.5 1.5 2 1.5 H11" fill="none" stroke="#fbf6c0" stroke-width="1" stroke-opacity="0.8"/><path d="M11.5 0.7 V4.5 H15.3 Z" fill="#ffffff" fill-opacity="0.32" stroke="#cbbb52" stroke-width="0.8" stroke-linejoin="round"/><text x="1.5" y="10.7" font-size="9.6" fill="#3a3400" stroke="#3a3400" stroke-width="0.4" font-family="Liberation Sans, sans-serif" textLength="9.8" lengthAdjust="spacingAndGlyphs">ab</text></svg><div class="c1"><span id="t24_1" class="gt">&gt; &gt;</span></div><div class="c2"></div></div>
<div class="r g"><svg class="ic" width="16" height="16" viewBox="0 0 16 16"><path d="M0.5 2 Q0.5 0.5 2 0.5 H11.5 L15.5 4.5 V14.2 L14.6 14.9 L13.4 15.9 L12.4 14.0 L11.3 15 L10 12.6 L8.7 15 L7.4 12.6 L6 15 L4.8 12.6 L3.5 15 L2.2 13 L0.5 15 Z" fill="url(#gy)"/><path d="M0.5 14.6 V2 Q0.5 0.5 2 0.5 H11.5 L15.5 4.5 V14.4" fill="none" stroke="#cbbb52" stroke-width="1" stroke-linejoin="round"/><path d="M15.5 4.5 V14.2 L14.6 14.9 L13.4 15.9 L12.4 14.0 L11.3 15 L10 12.6 L8.7 15 L7.4 12.6 L6 15 L4.8 12.6 L3.5 15 L2.2 13 L0.5 15" fill="none" stroke="#cbbb52" stroke-width="0.5" stroke-linejoin="round"/><path d="M1.5 13 V2 Q1.5 1.5 2 1.5 H11" fill="none" stroke="#fbf6c0" stroke-width="1" stroke-opacity="0.8"/><path d="M11.5 0.7 V4.5 H15.3 Z" fill="#ffffff" fill-opacity="0.32" stroke="#cbbb52" stroke-width="0.8" stroke-linejoin="round"/><text x="1.5" y="10.7" font-size="9.6" fill="#3a3400" stroke="#3a3400" stroke-width="0.4" font-family="Liberation Sans, sans-serif" textLength="9.8" lengthAdjust="spacingAndGlyphs">ab</text></svg><div class="c1"><span id="t25_1" style="letter-spacing:-0.421px">RISK MANAGEMENT 1</span><span class="d" style="margin-left:1.5px">----------------------------------------</span><span class="e">...</span></div><div class="c2"><span class="d" style="margin-left:0px">----------------------------------------------------------------------</span><span class="e">...</span></div></div>
<div class="r"><svg class="ic" width="16" height="16" viewBox="0 0 16 16"><path d="M0.5 2 Q0.5 0.5 2 0.5 H11.5 L15.5 4.5 V14.2 L14.6 14.9 L13.4 15.9 L12.4 14.0 L11.3 15 L10 12.6 L8.7 15 L7.4 12.6 L6 15 L4.8 12.6 L3.5 15 L2.2 13 L0.5 15 Z" fill="url(#gb)"/><path d="M0.5 14.6 V2 Q0.5 0.5 2 0.5 H11.5 L15.5 4.5 V14.4" fill="none" stroke="#74a0d2" stroke-width="1" stroke-linejoin="round"/><path d="M15.5 4.5 V14.2 L14.6 14.9 L13.4 15.9 L12.4 14.0 L11.3 15 L10 12.6 L8.7 15 L7.4 12.6 L6 15 L4.8 12.6 L3.5 15 L2.2 13 L0.5 15" fill="none" stroke="#74a0d2" stroke-width="0.5" stroke-linejoin="round"/><path d="M1.5 13 V2 Q1.5 1.5 2 1.5 H11" fill="none" stroke="#c4dcf8" stroke-width="1" stroke-opacity="0.8"/><path d="M11.5 0.7 V4.5 H15.3 Z" fill="#ffffff" fill-opacity="0.32" stroke="#74a0d2" stroke-width="0.8" stroke-linejoin="round"/><text x="1.7" y="10.9" font-size="7.4" font-weight="bold" fill="#061a44" font-family="Liberation Sans, sans-serif" textLength="11.2" lengthAdjust="spacingAndGlyphs">123</text></svg><div class="c1"><span id="t26_1" style="letter-spacing:0.140px">Close all positions after price moves X pips from first entry</span></div><div class="c2"><span id="t26_2" style="letter-spacing:-0.280px">Enable</span></div></div>
<div class="r g"><svg class="ic" width="16" height="16" viewBox="0 0 16 16"><path d="M0.5 2 Q0.5 0.5 2 0.5 H11.5 L15.5 4.5 V14.2 L14.6 14.9 L13.4 15.9 L12.4 14.0 L11.3 15 L10 12.6 L8.7 15 L7.4 12.6 L6 15 L4.8 12.6 L3.5 15 L2.2 13 L0.5 15 Z" fill="url(#gb)"/><path d="M0.5 14.6 V2 Q0.5 0.5 2 0.5 H11.5 L15.5 4.5 V14.4" fill="none" stroke="#74a0d2" stroke-width="1" stroke-linejoin="round"/><path d="M15.5 4.5 V14.2 L14.6 14.9 L13.4 15.9 L12.4 14.0 L11.3 15 L10 12.6 L8.7 15 L7.4 12.6 L6 15 L4.8 12.6 L3.5 15 L2.2 13 L0.5 15" fill="none" stroke="#74a0d2" stroke-width="0.5" stroke-linejoin="round"/><path d="M1.5 13 V2 Q1.5 1.5 2 1.5 H11" fill="none" stroke="#c4dcf8" stroke-width="1" stroke-opacity="0.8"/><path d="M11.5 0.7 V4.5 H15.3 Z" fill="#ffffff" fill-opacity="0.32" stroke="#74a0d2" stroke-width="0.8" stroke-linejoin="round"/><text x="1.7" y="10.9" font-size="7.4" font-weight="bold" fill="#061a44" font-family="Liberation Sans, sans-serif" textLength="11.2" lengthAdjust="spacingAndGlyphs">123</text></svg><div class="c1"><span id="t27_1" style="letter-spacing:0.160px">Pip distance to trigger position closure (0 = use default)</span></div><div class="c2"><span id="t27_2" style="letter-spacing:0.000px">0</span></div></div>
<div class="r"><svg class="ic" width="16" height="16" viewBox="0 0 16 16"><path d="M0.5 2 Q0.5 0.5 2 0.5 H11.5 L15.5 4.5 V14.2 L14.6 14.9 L13.4 15.9 L12.4 14.0 L11.3 15 L10 12.6 L8.7 15 L7.4 12.6 L6 15 L4.8 12.6 L3.5 15 L2.2 13 L0.5 15 Z" fill="url(#gb)"/><path d="M0.5 14.6 V2 Q0.5 0.5 2 0.5 H11.5 L15.5 4.5 V14.4" fill="none" stroke="#74a0d2" stroke-width="1" stroke-linejoin="round"/><path d="M15.5 4.5 V14.2 L14.6 14.9 L13.4 15.9 L12.4 14.0 L11.3 15 L10 12.6 L8.7 15 L7.4 12.6 L6 15 L4.8 12.6 L3.5 15 L2.2 13 L0.5 15" fill="none" stroke="#74a0d2" stroke-width="0.5" stroke-linejoin="round"/><path d="M1.5 13 V2 Q1.5 1.5 2 1.5 H11" fill="none" stroke="#c4dcf8" stroke-width="1" stroke-opacity="0.8"/><path d="M11.5 0.7 V4.5 H15.3 Z" fill="#ffffff" fill-opacity="0.32" stroke="#74a0d2" stroke-width="0.8" stroke-linejoin="round"/><text x="1.7" y="10.9" font-size="7.4" font-weight="bold" fill="#061a44" font-family="Liberation Sans, sans-serif" textLength="11.2" lengthAdjust="spacingAndGlyphs">123</text></svg><div class="c1"><span id="t28_1" style="letter-spacing:0.162px">Auto-adjust position stop loss to the recent settings</span></div><div class="c2"><span id="t28_2" style="letter-spacing:-0.700px">Yes</span></div></div>
<div class="r g"><svg class="ic" width="16" height="16" viewBox="0 0 16 16"><path d="M0.5 2 Q0.5 0.5 2 0.5 H11.5 L15.5 4.5 V14.2 L14.6 14.9 L13.4 15.9 L12.4 14.0 L11.3 15 L10 12.6 L8.7 15 L7.4 12.6 L6 15 L4.8 12.6 L3.5 15 L2.2 13 L0.5 15 Z" fill="url(#gy)"/><path d="M0.5 14.6 V2 Q0.5 0.5 2 0.5 H11.5 L15.5 4.5 V14.4" fill="none" stroke="#cbbb52" stroke-width="1" stroke-linejoin="round"/><path d="M15.5 4.5 V14.2 L14.6 14.9 L13.4 15.9 L12.4 14.0 L11.3 15 L10 12.6 L8.7 15 L7.4 12.6 L6 15 L4.8 12.6 L3.5 15 L2.2 13 L0.5 15" fill="none" stroke="#cbbb52" stroke-width="0.5" stroke-linejoin="round"/><path d="M1.5 13 V2 Q1.5 1.5 2 1.5 H11" fill="none" stroke="#fbf6c0" stroke-width="1" stroke-opacity="0.8"/><path d="M11.5 0.7 V4.5 H15.3 Z" fill="#ffffff" fill-opacity="0.32" stroke="#cbbb52" stroke-width="0.8" stroke-linejoin="round"/><text x="1.5" y="10.7" font-size="9.6" fill="#3a3400" stroke="#3a3400" stroke-width="0.4" font-family="Liberation Sans, sans-serif" textLength="9.8" lengthAdjust="spacingAndGlyphs">ab</text></svg><div class="c1"><span id="t29_1" class="gt">&gt; &gt;</span></div><div class="c2"></div></div>
</div>
<div class="sb"><div class="thumb"></div></div>
</div>
</body></html>
